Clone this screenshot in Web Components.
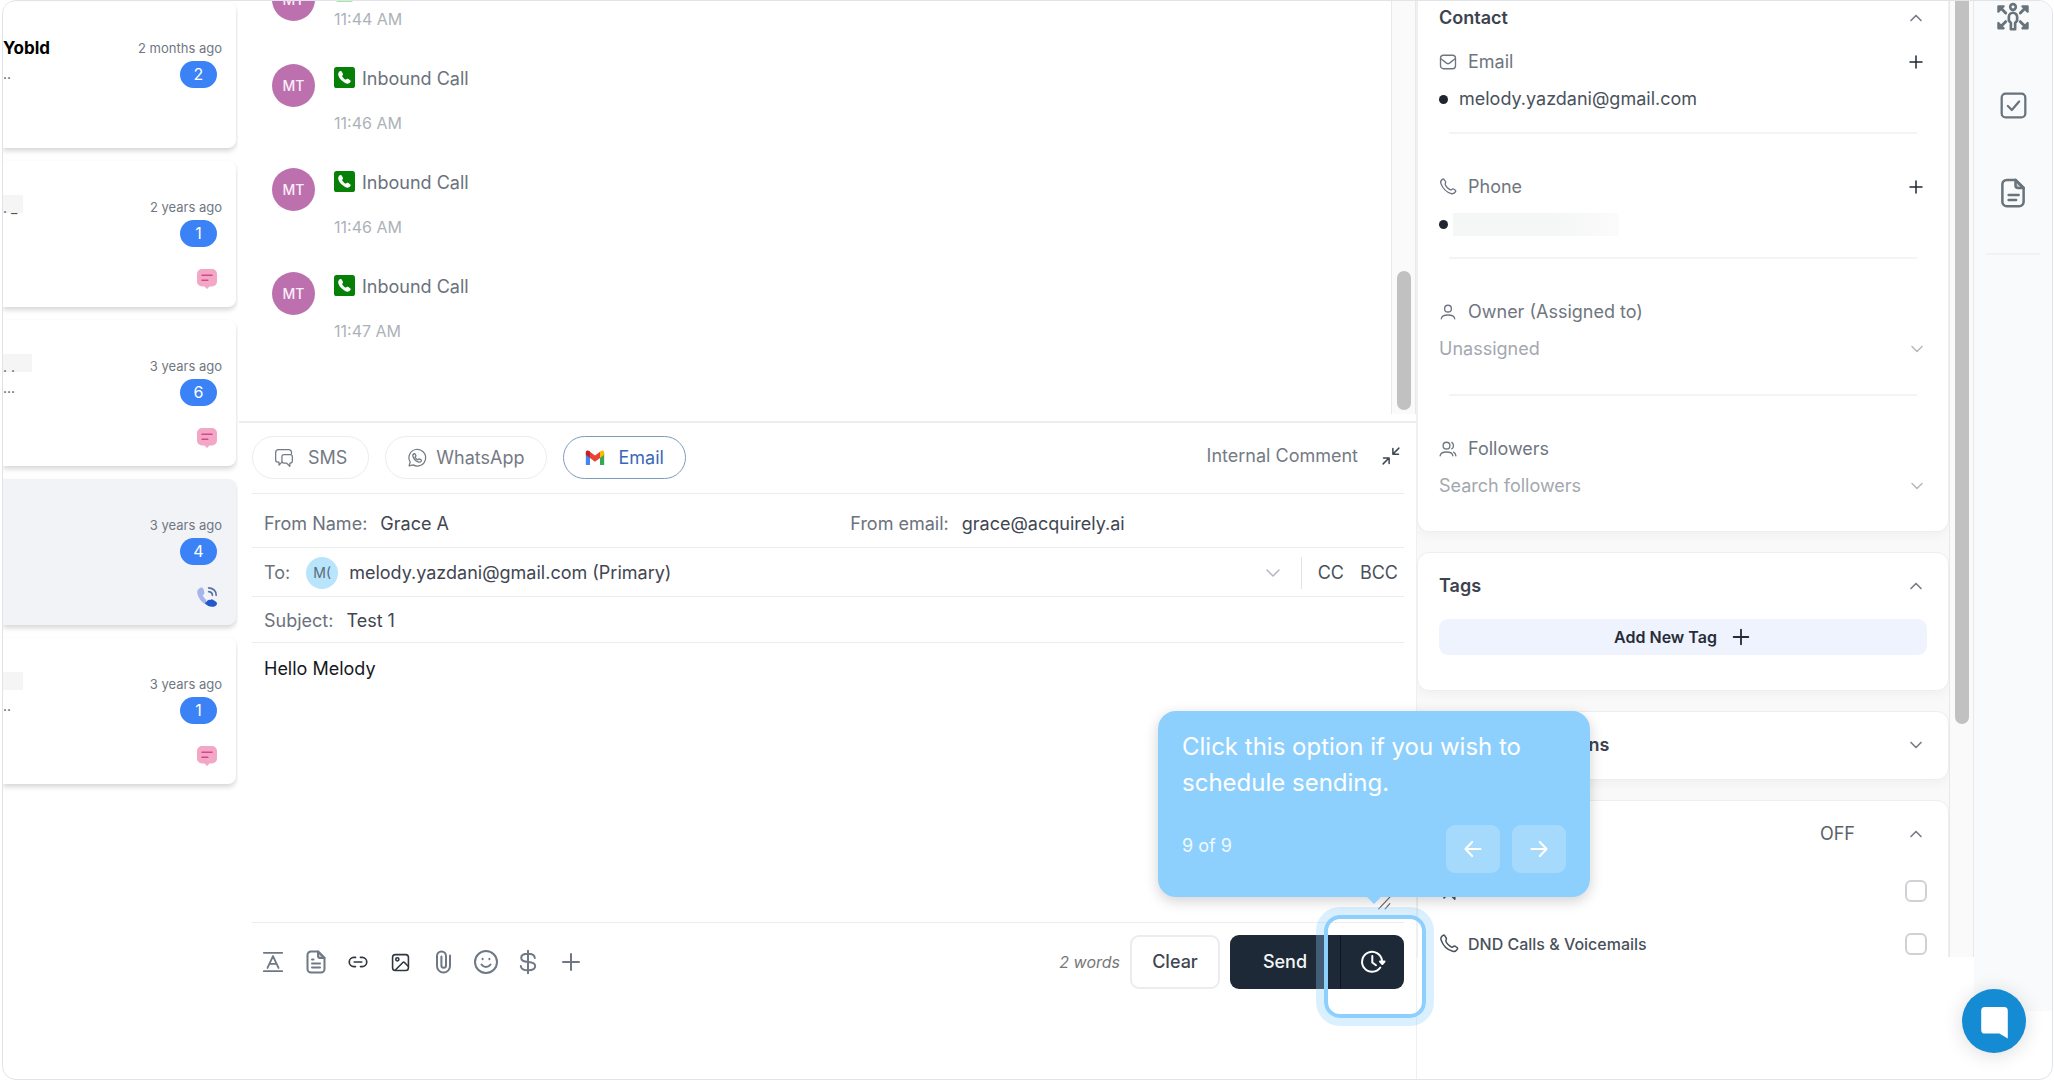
<!DOCTYPE html>
<html lang="en">
<head>
<meta charset="utf-8">
<title>Conversations</title>
<style>
  body {
    margin: 0;
    background: #fff;
    color: #3a414d;
    font-family: Inter, "Liberation Sans", sans-serif;
    font-size: 18px;
    line-height: 24px;
  }
</style>
</head>
<body>
<inbox-app></inbox-app>

<script>
const ICONS = {
  'chevron-up': '<path d="M6 15l6-6 6 6"/>',
  'chevron-down': '<path d="M6 9l6 6 6-6"/>',
  plus: '<path d="M12 4v16M4 12h16"/>',
  mail: '<rect x="2" y="3" width="20" height="18" rx="4"/><path d="M3 8l7 5.500q2 1.500 4 0L21 8"/>',
  phone: '<path d="M8.400 9c.7 1.500 1.600 2.800 2.800 4s2.500 2.100 4 2.800c.3.100.5.100.8 0l1.900-1.100c.6-.3 1-.3 1.500 0l2.400 1.700c.7.500.7 1.200.3 1.800-1.400 2.300-3.200 3.300-5.700 2.600C9.500 18.800 4.700 13.500 2.500 7.200c-.8-2.400.2-4.300 2.500-5.600.7-.4 1.400-.2 1.800.4l1.900 2.800c.3.500.3 1 0 1.500L8.300 8c-.1.400-.1.700.1 1z"/>',
  user: '<circle cx="12" cy="7.500" r="4.500"/><path d="M3 21c.5-3.500 4-5 9-5s8.500 1.500 9 5"/>',
  users: '<circle cx="10" cy="7.500" r="4.500"/><path d="M1.500 21c.5-3.500 3.500-5 8.500-5s8 1.500 8.500 5M17 3.200c3 1.300 3 7.300 0 8.600M19.500 16.200c1.800.9 2.800 2.500 3 4.800"/>',
  chats: '<path d="M6 17H4.500A2.500 2.500 0 0 1 2 14.500v-9A3.500 3.500 0 0 1 5.500 2h12A3.500 3.500 0 0 1 21 5v2M6 17v3.500L9.500 17"/><path d="M12 8h7.500A2.500 2.500 0 0 1 22 10.500v5a2.500 2.500 0 0 1-2.500 2.500H19v4l-4-4h-3a2.500 2.500 0 0 1-2.500-2.500v-5A2.500 2.500 0 0 1 12 8z"/>',
  whatsapp: '<path d="M2.500 21.500l1.300-4.700A10 10 0 1 1 7.400 20.300z"/><path d="M8.700 6.800c-1.400.5-2 1.800-1.500 3.400 1 3.200 3.400 5.700 6.700 6.700 1.600.5 3-.3 3.400-1.700.1-.4 0-.7-.3-.9l-2.200-1.200c-.4-.2-.7-.1-1 .2l-.8 1c-1.600-.7-2.700-1.800-3.400-3.400l.9-.8c.3-.3.400-.6.200-1L9.600 7.100c-.2-.3-.5-.4-.9-.3z"/>',
  collapse: '<path d="M22.500 1.500L15 9M14.500 2v7.500H22M1.500 22.500L9 15M2 14.500h7.500V22"/>',
  format: '<path d="M2 2h20M2 22h20M6 18.500l6-13 6 13M8.200 14h7.600"/>',
  doc: '<path d="M14 1.500H7A3.500 3.500 0 0 0 3.500 5v14A3.500 3.500 0 0 0 7 22.500h10a3.500 3.500 0 0 0 3.500-3.500V8z"/><path d="M14 1.500V6a2 2 0 0 0 2 2h4.500z" fill="currentColor" fill-opacity=".35"/><path d="M8 9.500h1.500M8 13.500h8M8 17.500h8"/>',
  note: '<path d="M14 1.500H7A3.500 3.500 0 0 0 3.500 5v14A3.500 3.500 0 0 0 7 22.500h10a3.500 3.500 0 0 0 3.500-3.500V8z"/><path d="M14 1.500V6a2 2 0 0 0 2 2h4.500z" fill="currentColor" fill-opacity=".35"/><path d="M8.500 13.500h8M8.500 17.500h6"/>',
  link: '<path d="M9 17.500H7a5.500 5.500 0 0 1 0-11h2M15 6.500h2a5.500 5.500 0 0 1 0 11h-2M7.500 12h9"/>',
  image: '<rect x="2" y="2" width="20" height="20" rx="3.500"/><circle cx="8" cy="8" r="2"/><path d="M5.500 21.500l9.500-9.500q1-1 2 0l5 5"/>',
  clip: '<path d="M19 5.500V16a6.500 6.500 0 0 1-13 0V6a4.500 4.500 0 0 1 9 0v9.500a2.300 2.300 0 0 1-4.600 0V6.500"/>',
  smile: '<circle cx="12" cy="12" r="11"/><path d="M7.500 14.500c1 1.600 2.600 2.400 4.500 2.400s3.500-.8 4.500-2.400M8.600 8.800v.4M15.400 8.800v.4"/>',
  dollar: '<path d="M12 .8v22.400M18.800 8c-.3-2.800-2.500-4.200-6.800-4.200S5.200 5 5.200 7.800 7.600 11.700 12 12s7.200 1.200 7.200 4-2.700 4.300-7.200 4.300S5 18.700 4.800 16"/>',
  'arrow-left': '<path d="M21 12H3.500M11 3.500L3 12l8 8.500"/>',
  'arrow-right': '<path d="M3 12h17.500M13 3.500L21 12l-8 8.500"/>',
  'clock-send': '<path d="M19.300 17.500A10 10 0 1 1 21 10.500"/><path d="M11.300 6v6.500l3.700 2.700"/><path d="M19 11.500h4.500l-2.200 2.500z" fill="currentColor"/>',
  check: '<rect x="1.500" y="1.500" width="21" height="21" rx="3.500"/><path d="M7 12.500l3.500 3.500L17 8.500"/>',
  people: '<circle cx="12" cy="4.500" r="2.100"/><path d="M10.400 21.200v-4.700l-1.500-1.700v-2.900a3.100 3.100 0 0 1 6.200 0v2.900l-1.500 1.700v4.700z"/><g stroke-width="1.600"><path d="M6.500 9L3 5.500M17.500 9L21 5.500M6.500 15.500L3 19M17.500 15.500L21 19" stroke-width="2.200"/><path fill="currentColor" d="M1 8V4h4zM23 8V4h-4zM1 16.500v4h4zM23 16.500v4h-4z"/></g>',
  grip: '<path d="M3 22L22 2M14 22l8-9"/>',
  gmail: '<g stroke="none"><path fill="#4285f4" d="M1 20.500h5V10L1 6.300z"/><path fill="#34a853" d="M18 20.500h5V6.300L18 10z"/><path fill="#ea4335" d="M6 4.500l6 4.500 6-4.500V12l-6 4.500L6 12z"/><path fill="#c5221f" d="M1 5c0-2 2.300-2.800 4-1.500l1 .8V12L1 8z"/><path fill="#fbbc04" d="M23 5c0-2-2.300-2.800-4-1.500l-1 .8V12l5-4z"/></g>',
  'call-box': '<g stroke="none"><rect width="24" height="24" rx="3" fill="#078007"/><path fill="#fff" d="M5.300 6.200c1.100-1.600 2.600-2 3.400-1l1.500 2.500c.4.800.1 1.500-1 2.500.7 1.800 2 3.200 4.200 4.300 1-1.200 1.800-1.400 2.600-1l2.500 1.500c1 .7.600 2.200-1 3.400-2 1.400-5.200.4-8.600-2.900S4 8.400 5.300 6.200z"/></g>',
  'light-box': '<rect x="2" width="20" height="24" rx="3" fill="#9be8a0" stroke="none"/>',
  bubble: '<path stroke="none" fill="#f4a6c6" d="M6 0h12a6 6 0 0 1 6 6v9a6 6 0 0 1-6 6h-3l-3 3-3-3H6a6 6 0 0 1-6-6V6a6 6 0 0 1 6-6z"/><path d="M6 7.500h12M6 13.500h7" stroke="#cf4b86" stroke-width="1.800"/>',
  ringing: '<g stroke="none"><path fill="#a5b4ea" d="M3 1.500c2-1.500 4.300-1 4.800 1l1 4c.3 1.500-.5 2.500-2 3.300 1 2.200 2.400 4 4.300 5.600L11 21C4.500 18 .5 11.500.3 6 .3 4 1.300 2.700 3 1.500z"/><path fill="#2456cc" d="M9.500 19.500l3.500-3.500c1-1 2-1 3-.5 1-1 2.500-1 3.500 0l2.500 1.500c2 1 2.500 3 1.500 4.500-3 3.500-10 3-14-2z"/></g><path stroke="#5a71a3" d="M14 1c5.500.5 9 4 9 9M14 5.500c3 .3 4.500 2 4.500 4.500"/>',
  launcher: '<path stroke="none" fill="#fff" d="M4 0h16a3 3 0 0 1 3 3v23l-7-4H4a3 3 0 0 1-3-3V3a3 3 0 0 1 3-3z"/>'
};

// Small helper: every element below only needs a shadow root filled once.
class BaseElement extends HTMLElement {
  connectedCallback() {
    if (this.shadowRoot) return;
    this.attachShadow({ mode: 'open' });
    this.shadowRoot.innerHTML = this.template();
  }

  attr(name, fallback = '') {
    return this.getAttribute(name) || fallback;
  }
}

class UiIcon extends BaseElement {
  template() {
    const size = this.attr('size', '24');
    return `
      <style>
        :host { display: inline-flex; flex: none; }
        svg {
          display: block;
          overflow: visible;
          fill: none;
          stroke: currentColor;
          stroke-linecap: round;
          stroke-linejoin: round;
        }
      </style>
      <svg width="${size}" height="${size}" viewBox="0 0 24 24" stroke-width="${this.attr('weight', '2')}" aria-hidden="true">${ICONS[this.attr('name')]}</svg>
    `;
  }
}

class ConversationCard extends BaseElement {
  template() {
    const channel = this.attr('channel');
    return `
      <style>
        :host {
          display: grid;
          grid-template-columns: minmax(0, 1fr) auto;
          box-sizing: border-box;
          height: 146px;
          padding: 34px 14px 0 0;
          border-radius: 0 8px 8px 0;
          background: #fff;
          box-shadow: 0 3px 5px rgba(0, 0, 0, .16);
        }
        :host([active]) { background: #f2f3f7; }
        .preview { overflow: hidden; color: #555; font-size: 14px; }
        .meta {
          display: flex;
          flex-direction: column;
          align-items: flex-end;
          font-size: 13px;
          color: #6f7782;
        }
        .badge {
          min-width: 17px;
          margin: 1px 5px 0 0;
          padding: 1px 10px 2px;
          border-radius: 14px;
          background: #3b82f6;
          color: #fff;
          font-size: 16px;
          text-align: center;
        }
        ui-icon { margin: 22px 5px 0 0; }
      </style>
      <div class="preview"><slot></slot></div>
      <div class="meta">
        <span>${this.attr('time')}</span>
        <span class="badge">${this.attr('count')}</span>
        ${channel ? `<ui-icon name="${channel}" size="20"></ui-icon>` : ''}
      </div>
    `;
  }
}

class ConversationList extends BaseElement {
  template() {
    return `
      <style>
        :host {
          display: flex;
          flex-direction: column;
          gap: 13px;
          padding: 1px 2px 0 0;
          overflow: hidden;
        }
        b { display: block; color: #000; font-size: 17px; }
        p { margin: 6px 0 0; line-height: 16px; }
        .mask {
          display: block;
          height: 22px;
          margin-top: -4px;
          background: #f5f5f5;
          line-height: 34px;
        }
        .mask + p { margin-top: 8px; }
        .short { width: 20px; }
        .long { width: 29px; }
      </style>
      <conversation-card time="2 months ago" count="2"><b>Yobld</b><p>..</p></conversation-card>
      <conversation-card time="2 years ago" count="1" channel="bubble"><span class="mask short">. _</span></conversation-card>
      <conversation-card time="3 years ago" count="6" channel="bubble"><span class="mask long">. .</span><p>...</p></conversation-card>
      <conversation-card time="3 years ago" count="4" channel="ringing" active></conversation-card>
      <conversation-card time="3 years ago" count="1" channel="bubble"><span class="mask short"></span><p>..</p></conversation-card>
    `;
  }
}

class CallMessage extends BaseElement {
  template() {
    return `
      <style>
        :host {
          display: flex;
          flex: none;
          gap: 19px;
          height: 104px;
        }
        :host([compact]) { height: 86px; }
        :host([compact]) .body { gap: 2px; }
        .avatar {
          flex: none;
          width: 43px;
          height: 43px;
          border-radius: 50%;
          background: #bd70ae;
          color: #fbeefa;
          font-size: 14px;
          font-weight: 500;
          line-height: 43px;
          text-align: center;
        }
        .body { display: flex; flex-direction: column; gap: 20px; padding-top: 3px; }
        .line { display: flex; gap: 7px; height: 24px; color: #6b727c; }
        .time { color: #adb2b8; font-size: 16px; }
      </style>
      <span class="avatar">MT</span>
      <div class="body">
        <span class="line"><ui-icon name="${this.attr('icon', 'call-box')}" size="21"></ui-icon><slot></slot></span>
        <span class="time">${this.attr('time')}</span>
      </div>
    `;
  }
}

class ScrollRail extends BaseElement {
  template() {
    return `
      <style>
        :host {
          display: flex;
          flex-direction: column;
          align-items: center;
          box-sizing: border-box;
          width: 25px;
          border: solid #e9e9e9;
          border-width: 0 1px;
          background: #fafafa;
        }
        .before { flex: ${this.attr('before', '0')} 0 0; }
        .thumb { flex: ${this.attr('thumb', '1')} 0 0; width: 14px; border-radius: 7px; background: #c1c1c1; }
        .after { flex: ${this.attr('after', '0')} 0 0; }
        :host([top]) .thumb { border-radius: 0 0 7px 7px; }
      </style>
      <div class="before"></div><div class="thumb"></div><div class="after"></div>
    `;
  }
}

class MessageThread extends BaseElement {
  template() {
    return `
      <style>
        :host { display: flex; overflow: hidden; }
        .messages {
          display: flex;
          flex: 1;
          flex-direction: column;
          justify-content: flex-end;
          padding: 0 0 45px 33px;
          min-height: 0;
        }
        scroll-rail { margin-bottom: 7px; }
      </style>
      <div class="messages">
        <call-message time="11:44 AM" icon="light-box" compact></call-message>
        <call-message time="11:46 AM">Inbound Call</call-message>
        <call-message time="11:46 AM">Inbound Call</call-message>
        <call-message time="11:47 AM">Inbound Call</call-message>
      </div>
      <scroll-rail before="270" thumb="140" after="4"></scroll-rail>
    `;
  }
}

class ChannelTab extends BaseElement {
  template() {
    return `
      <style>
        button {
          display: flex;
          align-items: center;
          gap: 14px;
          height: 43px;
          padding: 0 21px;
          border: 1px solid #ececee;
          border-radius: 22px;
          background: #fff;
          color: #747a84;
          font: inherit;
        }
        :host([tight]) button { gap: 9px; }
        :host([selected]) button { border-color: #7d9cbd; color: #3b67b8; }
      </style>
      <button type="button"><ui-icon name="${this.attr('icon')}" size="20" weight="1.500"></ui-icon><slot></slot></button>
    `;
  }
}

class TourTip extends BaseElement {
  template() {
    return `
      <style>
        :host {
          display: block;
          position: relative;
          box-sizing: border-box;
          width: 432px;
          padding: 18px 24px 24px;
          border-radius: 18px;
          background: #8ed0fd;
          box-shadow: 0 4px 14px rgba(0, 0, 0, .18);
          color: #fff;
        }
        :host::after {
          content: "";
          position: absolute;
          top: 100%;
          left: calc(50% - 7px);
          border: 7px solid transparent;
          border-top-color: #8ed0fd;
        }
        p { margin: 0; font-size: 24px; line-height: 36px; }
        footer { display: flex; align-items: center; gap: 12px; margin-top: 24px; }
        span { flex: 1; padding-bottom: 6px; color: #f0f9ff; }
        button {
          display: flex;
          align-items: center;
          justify-content: center;
          width: 54px;
          height: 48px;
          padding: 0;
          border: 0;
          border-radius: 9px;
          background: #a6dafd;
          color: #fff;
        }
      </style>
      <p><slot></slot></p>
      <footer>
        <span>${this.attr('step')}</span>
        <button type="button" aria-label="Previous"><ui-icon name="arrow-left" size="20" weight="2.500"></ui-icon></button>
        <button type="button" aria-label="Next"><ui-icon name="arrow-right" size="20" weight="2.500"></ui-icon></button>
      </footer>
    `;
  }
}

class EmailComposer extends BaseElement {
  template() {
    return `
      <style>
        :host {
          display: flex;
          flex-direction: column;
          padding: 0 12px 90px 13px;
          border-top: 2px solid #ececee;
        }
        label { color: #6b727d; }
        input, select, textarea {
          min-width: 0;
          padding: 0;
          border: 0;
          outline: 0;
          appearance: none;
          background: none;
          color: #3f4651;
          font: inherit;
        }
        .tabs { display: flex; align-items: center; gap: 16px; height: 43px; padding: 13px 4px 14px 0; }
        .comment { display: flex; gap: 24px; align-items: center; margin-left: auto; padding-bottom: 4px; color: #747b85; }
        .comment ui-icon { color: #3f4651; }
        .row {
          display: flex;
          align-items: center;
          height: 46px;
          padding: 2px 0 0 12px;
          border-top: 1px solid #ececee;
        }
        .from { display: grid; grid-template-columns: 18fr 17fr; padding-top: 7px; }
        .field { display: flex; gap: 13px; }
        .field input { flex: 1; }
        .to { gap: 16px; }
        .avatar {
          width: 32px;
          height: 32px;
          border-radius: 50%;
          background: #b8e5fb;
          color: #5a6b7a;
          font-size: 14px;
          line-height: 32px;
          text-align: center;
        }
        .to select { flex: 1; margin-left: -5px; }
        .to > ui-icon { color: #b3b6bb; }
        .to button { padding: 0; border: 0; background: none; color: #4a515c; font: inherit; }
        .to button:last-child { padding-right: 6px; }
        .to hr { width: 1px; height: 32px; margin: 0; border: 0; background: #e2e2e4; }
        .subject { height: 43px; }
        .body { display: grid; flex: 1; min-height: 0; border-top: 1px solid #ececee; }
        .body > * { grid-area: 1 / 1; }
        .body textarea { padding: 14px 12px; resize: none; color: #15181d; }
        .body ui-icon { align-self: end; justify-self: end; margin: 0 13px 12px 0; color: #666; }
        .toolbar {
          display: flex;
          align-items: center;
          padding-top: 12px;
          border-top: 1px solid #ececee;
        }
        .tools { display: flex; flex: 0 0 322px; justify-content: space-between; margin-left: 9px; color: #6f7885; }
        .tools button {
          display: flex;
          align-items: center;
          justify-content: center;
          width: 24px;
          height: 24px;
          padding: 0;
          border: 0;
          background: none;
          color: inherit;
        }
        .tools .dark { color: #30363f; }
        .count { margin-left: auto; color: #777; font-size: 16px; font-style: italic; }
        .action { box-sizing: border-box; height: 54px; border: 0; border-radius: 9px; font: inherit; font-weight: 500; }
        .clear { width: 90px; margin: 0 10px; border: 2px solid #ececee; background: #fff; color: #3f4651; }
        .send { width: 110px; padding: 0; border-radius: 9px 0 0 9px; background: #1e2938; color: #f4f5f7; }
        .schedule { position: relative; }
        .later {
          display: flex;
          align-items: center;
          justify-content: center;
          width: 64px;
          padding: 0;
          border-left: 1px solid #0d1520;
          border-radius: 0 9px 9px 0;
          background: #1e2938;
          color: #fff;
        }
        .ring {
          position: absolute;
          inset: -20px -22px -29px -16px;
          border: 4px solid #8ed0fd;
          border-radius: 16px;
          box-shadow: 0 0 0 8px rgba(142, 208, 253, .32);
          pointer-events: none;
        }
        tour-tip { position: absolute; right: -186px; bottom: calc(100% + 38px); }
      </style>
      <div class="tabs">
        <channel-tab icon="chats">SMS</channel-tab>
        <channel-tab icon="whatsapp" tight>WhatsApp</channel-tab>
        <channel-tab icon="gmail" selected>Email</channel-tab>
        <span class="comment">Internal Comment <ui-icon name="collapse" size="18" weight="2"></ui-icon></span>
      </div>
      <div class="row from">
        <div class="field"><label for="name">From Name:</label><input id="name" value="Grace A"></div>
        <div class="field"><label for="email">From email:</label><input id="email" value="grace@acquirely.ai"></div>
      </div>
      <div class="row to">
        <label for="to">To:</label>
        <span class="avatar">M(</span>
        <select id="to"><option>melody.yazdani@gmail.com (Primary)</option></select>
        <ui-icon name="chevron-down" size="24" weight="1.500"></ui-icon>
        <hr>
        <button type="button">CC</button>
        <button type="button">BCC</button>
      </div>
      <div class="row subject field"><label for="subject">Subject:</label><input id="subject" value="Test 1"></div>
      <div class="body">
        <textarea aria-label="Message">Hello Melody</textarea>
        <ui-icon name="grip" size="14"></ui-icon>
      </div>
      <div class="toolbar">
        <div class="tools">
          <button type="button" aria-label="Text style"><ui-icon name="format" size="22"></ui-icon></button>
          <button type="button" aria-label="Templates"><ui-icon name="doc"></ui-icon></button>
          <button type="button" class="dark" aria-label="Link"><ui-icon name="link" size="20"></ui-icon></button>
          <button type="button" class="dark" aria-label="Image"><ui-icon name="image" size="19"></ui-icon></button>
          <button type="button" aria-label="Attachment"><ui-icon name="clip"></ui-icon></button>
          <button type="button" aria-label="Emoji"><ui-icon name="smile"></ui-icon></button>
          <button type="button" aria-label="Request payment"><ui-icon name="dollar"></ui-icon></button>
          <button type="button" aria-label="More"><ui-icon name="plus" size="24"></ui-icon></button>
        </div>
        <span class="count">2 words</span>
        <button type="button" class="action clear">Clear</button>
        <button type="button" class="action send">Send</button>
        <div class="schedule">
          <button type="button" class="action later" aria-label="Schedule"><ui-icon name="clock-send"></ui-icon></button>
          <div class="ring"></div>
          <tour-tip step="9 of 9">Click this option if you wish to schedule sending.</tour-tip>
        </div>
      </div>
    `;
  }
}

class SideCard extends BaseElement {
  template() {
    return `
      <style>
        :host {
          display: block;
          box-sizing: border-box;
          flex: none;
          padding: 16px 21px 0;
          border: 1px solid #eeeeef;
          border-radius: 12px;
          background: #fff;
          box-shadow: 0 5px 10px rgba(0, 0, 0, .03);
        }
        :host([first]) { padding-top: 0; border-top: 0; border-radius: 0 0 12px 12px; }
        header { display: flex; align-items: center; height: 34px; padding-right: 1px; }
        :host([first]) header { height: 33px; }
        h2 { flex: 1; margin: 0; font-size: 18px; font-weight: 600; line-height: 24px; color: #3c434e; }
        .state { margin-right: 51px; color: #5a616b; }
        ui-icon { color: #777d86; }
      </style>
      <header>
        <h2>${this.attr('heading')}</h2>
        <span class="state">${this.attr('state')}</span>
        <ui-icon name="chevron-${this.hasAttribute('closed') ? 'down' : 'up'}" size="20"></ui-icon>
      </header>
      <slot></slot>
    `;
  }
}

class ContactField extends BaseElement {
  template() {
    return `
      <style>
        :host { display: block; padding: 16px 0 25px; }
        :host([last]) { padding-bottom: 21px; }
        header { display: flex; align-items: center; gap: 11px; height: 24px; margin-bottom: 13px; color: #6f7680; }
        header button {
          display: flex;
          margin-left: auto;
          padding: 0 2px 0 0;
          border: 0;
          background: none;
          color: #20262f;
        }
        .line { height: 2px; margin: 21px 10px 0; background: #f4f4f5; }
        :host([last]) .line { display: none; }
      </style>
      <header>
        <ui-icon name="${this.attr('icon')}" size="18" weight="1.800"></ui-icon>
        <span>${this.attr('label')}</span>
        ${this.hasAttribute('add') ? '<button type="button" aria-label="Add"><ui-icon name="plus" size="18"></ui-icon></button>' : ''}
      </header>
      <slot></slot>
      <div class="line"></div>
    `;
  }
}

class DndRow extends BaseElement {
  template() {
    return `
      <style>
        :host { display: block; }
        label { display: flex; align-items: center; gap: 9px; height: 53px; font-size: 16px; font-weight: 500; color: #4a515c; }
        .text { flex: 1; }
        input {
          width: 22px;
          height: 22px;
          margin: 0;
          border: 2px solid #cfd1d4;
          border-radius: 6px;
          appearance: none;
          background: #fff;
        }
      </style>
      <label>
        <ui-icon name="${this.attr('icon')}" size="20" weight="1.800"></ui-icon>
        <span class="text"><slot></slot></span>
        <input type="checkbox" aria-label="${this.attr('label')}">
      </label>
    `;
  }
}

class ContactPanel extends BaseElement {
  template() {
    return `
      <style>
        :host { display: flex; margin-bottom: 122px; overflow: hidden; background: #f9f9f9; }
        .cards { display: flex; flex: 1; flex-direction: column; gap: 20px; min-width: 0; }
        .value { display: flex; align-items: center; gap: 11px; height: 24px; color: #4a515c; }
        .value::before { content: ""; width: 9px; height: 9px; border-radius: 50%; background: #20262f; }
        .mask { width: 166px; height: 23px; margin-left: -6px; background: linear-gradient(90deg, #f5f6f6 60%, #fbfbfb); }
        .pick { display: flex; align-items: center; height: 48px; margin: -12px 0 0; color: #b5b8bd; }
        .pick select, .pick input {
          flex: 1;
          padding: 0;
          border: 0;
          outline: 0;
          appearance: none;
          background: none;
          color: #a3a8af;
          font: inherit;
        }
        .pick input::placeholder { color: #a3a8af; }
        .tag {
          display: flex;
          align-items: center;
          justify-content: center;
          gap: 13px;
          width: 100%;
          height: 36px;
          margin: 16px 0 35px;
          padding: 0;
          border: 0;
          border-radius: 9px;
          background: #eff3fe;
          color: #262d38;
          font: inherit;
          font-size: 16px;
          font-weight: 600;
        }
        .closed { padding-bottom: 17px; }
        .dnd { padding-bottom: 60px; }
        .dnd dnd-row:first-of-type { margin-top: 13px; }
      </style>
      <div class="cards">
        <side-card heading="Contact" first>
          <contact-field icon="mail" label="Email" add><span class="value">melody.yazdani@gmail.com</span></contact-field>
          <contact-field icon="phone" label="Phone" add><span class="value"><i class="mask"></i></span></contact-field>
          <contact-field icon="user" label="Owner (Assigned to)">
            <span class="pick"><select aria-label="Owner"><option>Unassigned</option></select><ui-icon name="chevron-down" size="20" weight="1.800"></ui-icon></span>
          </contact-field>
          <contact-field icon="users" label="Followers" last>
            <span class="pick"><input aria-label="Followers" placeholder="Search followers"><ui-icon name="chevron-down" size="20" weight="1.800"></ui-icon></span>
          </contact-field>
        </side-card>
        <side-card heading="Tags">
          <button type="button" class="tag">Add New Tag <ui-icon name="plus" size="22"></ui-icon></button>
        </side-card>
        <side-card class="closed" heading="Active Automations" closed></side-card>
        <side-card class="dnd" state="OFF">
          <dnd-row icon="chats" label="DND all channels"></dnd-row>
          <dnd-row icon="phone" label="DND calls and voicemails">DND Calls &amp; Voicemails</dnd-row>
        </side-card>
      </div>
      <scroll-rail top thumb="723" after="233"></scroll-rail>
    `;
  }
}

class ToolRail extends BaseElement {
  template() {
    return `
      <style>
        :host {
          display: flex;
          flex-direction: column;
          align-items: center;
          box-sizing: border-box;
          margin-bottom: 68px;
          background: #f8fafc;
          color: #69737c;
        }
        a { display: flex; color: inherit; }
        a:nth-of-type(2) { margin: 59px 0; }
        hr { width: 54px; height: 2px; margin: 45px 0 0; border: 0; background: #f0f2f4; }
      </style>
      <a href="#contact" aria-label="Contact"><ui-icon name="people" size="32" weight="2"></ui-icon></a>
      <a href="#tasks" aria-label="Tasks"><ui-icon name="check" size="27"></ui-icon></a>
      <a href="#notes" aria-label="Notes"><ui-icon name="note" size="30"></ui-icon></a>
      <hr>
    `;
  }
}

class ChatLauncher extends BaseElement {
  template() {
    return `
      <style>
        :host { position: absolute; right: 26px; bottom: 26px; }
        button {
          display: flex;
          align-items: center;
          justify-content: center;
          width: 64px;
          height: 64px;
          padding: 0;
          border: 0;
          border-radius: 50%;
          background: #148bd2;
          box-shadow: 0 2px 20px rgba(0, 0, 0, .14);
        }
      </style>
      <button type="button" aria-label="Open chat"><ui-icon name="launcher" size="29"></ui-icon></button>
    `;
  }
}

class InboxApp extends BaseElement {
  template() {
    return `
      <style>
        :host {
          display: grid;
          position: relative;
          grid-template-columns: 235px minmax(0, 1fr) 557px 78px;
          box-sizing: border-box;
          height: 100vh;
          margin: 0 1px 0 2px;
          border: 1px solid #e2e3e8;
          border-radius: 14px;
          background: #fff;
          overflow: hidden;
        }
        main {
          display: flex;
          position: relative;
          z-index: 1;
          flex-direction: column;
          min-height: 0;
          padding-left: 1px;
          border-right: 1px solid #f0f0f1;
        }
        message-thread { flex: 0 0 39%; }
        email-composer { flex: 1; min-height: 0; }
        chat-launcher { z-index: 2; }
      </style>
      <conversation-list></conversation-list>
      <main>
        <message-thread></message-thread>
        <email-composer></email-composer>
      </main>
      <contact-panel></contact-panel>
      <tool-rail></tool-rail>
      <chat-launcher></chat-launcher>
    `;
  }
}

customElements.define('ui-icon', UiIcon);
customElements.define('conversation-card', ConversationCard);
customElements.define('conversation-list', ConversationList);
customElements.define('call-message', CallMessage);
customElements.define('scroll-rail', ScrollRail);
customElements.define('message-thread', MessageThread);
customElements.define('channel-tab', ChannelTab);
customElements.define('tour-tip', TourTip);
customElements.define('email-composer', EmailComposer);
customElements.define('side-card', SideCard);
customElements.define('contact-field', ContactField);
customElements.define('dnd-row', DndRow);
customElements.define('contact-panel', ContactPanel);
customElements.define('tool-rail', ToolRail);
customElements.define('chat-launcher', ChatLauncher);
customElements.define('inbox-app', InboxApp);
</script>
</body>
</html>
